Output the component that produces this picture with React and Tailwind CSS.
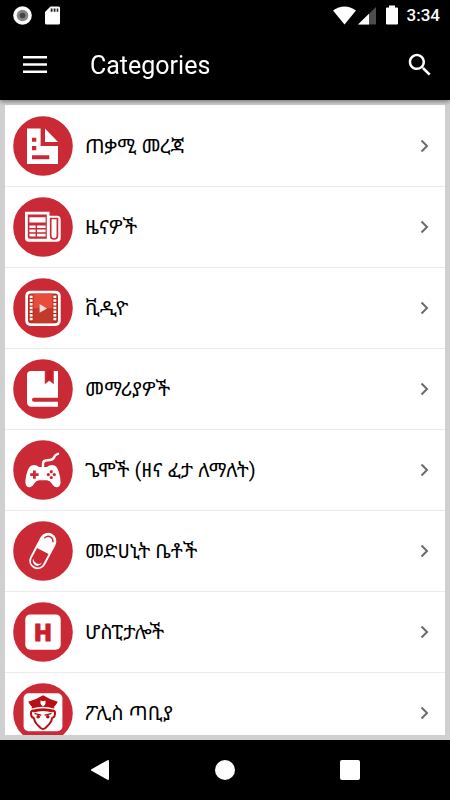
import React from "react";

const RED = "#c92a35";

function InfoIcon() {
  return (
    <>
      <path d="M14 12.6H27.6V30H45V48H14Z" fill="#fff" />
      <path d="M32 12.6L45 26H32Z" fill="#fff" />
      <path d="M19 21.7h4.3v4H19zM19 30h4.3v4.3H19zM19 39.3h17.3v4H19z" fill={RED} />
    </>
  );
}

function NewsIcon() {
  return (
    <>
      <path d="M12 14.7H36.5V18.7H44Q47.7 18.7 47.7 22.5V41Q47.7 44.8 44 44.8H16Q12 44.8 12 41Z" fill="#fff" />
      <path d="M14.8 17.4H33.8V41.8H17Q14.8 41.8 14.8 39.6Z" fill={RED} />
      <path d="M16.4 20.3H32.6V25.4H16.4zM16.4 28.5H22.6V31.1H16.4zM24 28.5H32.6V31.1H24zM16.4 32.6H22.6V35.2H16.4zM24 32.6H32.6V35.2H24zM16.4 36.7H22.6V39.6H18Q16.4 39.6 16.4 38zM24 36.7H32.6V39.6H24z" fill="#fff" />
      <path d="M37.7 21.5V38.5Q37.7 42 41 42Q44.4 42 44.4 38.5V21.5" fill="none" stroke={RED} strokeWidth="1.7" />
      <path d="M36.9 21.5H45.2" stroke={RED} strokeWidth="1.4" />
    </>
  );
}

function VideoIcon() {
  const holes = [17.6, 21.3, 25, 28.7, 32.4, 36.1, 39.8];
  return (
    <>
      <rect x="12.3" y="12.7" width="35.4" height="35.2" rx="5" fill="#fff" />
      <rect x="15" y="15.6" width="30" height="29.6" rx="3" fill="#b92b20" />
      <path d="M20.5 15.6H39.5V30.5H20.5Z" fill="#e84c3b" />
      <path d="M20.5 30.5H39.5V45.2H20.5Z" fill="#c33a2b" />
      {holes.map((y) => (
        <React.Fragment key={y}>
          <rect x="16.7" y={y} width="2.9" height="2.5" fill="#fff" />
          <rect x="40.4" y={y} width="2.9" height="2.5" fill="#fff" />
        </React.Fragment>
      ))}
      <path d="M26.6 26L34 30.4L26.6 34.7Z" fill="#ecdedb" />
    </>
  );
}

function BookIcon() {
  return (
    <>
      <path d="M18 12H45V47.7H18.5Q14 47.7 14 43V16Q14 12 18 12Z" fill="#fff" />
      <path d="M31.8 11.5H40.8V25.2L36.3 21.7L31.8 25.2Z" fill={RED} />
      <path d="M33.8 11.5H39V22L36.4 20L33.8 22Z" fill="#c21f2b" />
      <path d="M45.5 38.7H21a2 2 0 0 0 0 4H45.5Z" fill={RED} />
    </>
  );
}

function GameIcon() {
  return (
    <>
      <path d="M30 26V24Q30 20.5 34 20.3L37 20Q40.5 19.6 41.3 16.8Q42 14.6 45 13.8" fill="none" stroke="#fff" strokeWidth="2.4" strokeLinecap="round" />
      <path d="M20.5 25Q24 25 26 27H34Q36 25 39.5 25Q43.5 25 45.5 31Q47.8 38 47.6 42.5Q47.2 47 43.8 47.3Q41 47.3 38.8 43.5Q37 40.5 34 40.3H26Q23 40.5 21.2 43.5Q19 47.3 16.2 47.3Q12.8 47 12.4 42.5Q12.2 38 14.5 31Q16.5 25 20.5 25Z" fill="#fff" />
      <path d="M20 30.5h2.8V33.2h2.8V36h-2.8V38.7H20V36h-2.8V33.2H20Z" fill={RED} />
      <circle cx="38.3" cy="31.7" r="1.6" fill={RED} />
      <circle cx="38.3" cy="37.5" r="1.6" fill={RED} />
      <circle cx="35.3" cy="34.6" r="1.6" fill={RED} />
      <circle cx="41.3" cy="34.6" r="1.6" fill={RED} />
    </>
  );
}

function PillIcon() {
  return (
    <g transform="rotate(28 29.8 30)">
      <rect x="21.4" y="10.6" width="16.8" height="38.8" rx="8.4" fill="#fff" />
      <path d="M23.3 30H36.3V41Q36.3 47.5 29.8 47.5Q23.3 47.5 23.3 41Z" fill={RED} />
      <path d="M34.6 40.5Q34.5 45.5 29.8 46Q25.6 45.6 24.9 41.5Q26.8 43.9 29.8 43.9Q33.2 43.9 34.6 40.5Z" fill="#fff" />
      <path d="M25.3 17.4Q26.6 14 30 14Q33 14.1 34.4 17" fill="none" stroke={RED} strokeWidth="1.4" strokeLinecap="round" />
    </g>
  );
}

function HospitalIcon() {
  return (
    <>
      <rect x="12.3" y="12.4" width="35.4" height="35.4" rx="5" fill="#fff" />
      <text x="30" y="39" textAnchor="middle" fill="#c9202c" stroke="#c9202c" className="font-['Roboto',sans-serif] text-[24px] font-black">H</text>
    </>
  );
}

function PoliceIcon() {
  const c = "#b80f16";
  return (
    <>
      <rect x="10.6" y="10.2" width="38.8" height="38" rx="5" fill="#fff" />
      <path d="M15.2 18.8Q23 16.6 30 12.2Q37 16.6 44.8 18.8Q42.8 22.6 41.2 23.6V25.6Q30 21.8 18.8 25.6V23.6Q17.2 22.6 15.2 18.8Z" fill={c} />
      <path d="M27.5 17.5L30 18.2L32.5 17.5V20.5Q32.3 22 30 23.2Q27.7 22 27.5 20.5Z" fill="#fff" />
      <path d="M20 27.5Q17.6 28 18 31Q18.4 34.6 20.8 35Q21.6 39 24 41.4L27.6 45Q30 46.8 32.4 45L36 41.4Q38.4 39 39.2 35Q41.6 34.6 42 31Q42.4 28 40 27.5" fill="none" stroke={c} strokeWidth="2" strokeLinejoin="round" />
      <path d="M19.4 26.8Q30 23.8 40.6 26.8L39.5 29.5Q30 26.5 20.5 29.5Z" fill={c} />
      <path d="M22 30.6L28 32.2M38 30.6L32 32.2" stroke={c} strokeWidth="1.3" strokeLinecap="round" />
      <circle cx="25.2" cy="33.8" r="1.8" fill={c} />
      <circle cx="34.8" cy="33.8" r="1.8" fill={c} />
    </>
  );
}

const categories = [
  { label: "ጠቃሚ መረጃ", Icon: InfoIcon },
  { label: "ዜናዎች", Icon: NewsIcon },
  { label: "ቪዲዮ", Icon: VideoIcon },
  { label: "መማሪያዎች", Icon: BookIcon },
  { label: "ጌሞች (ዘና ፈታ ለማለት)", Icon: GameIcon },
  { label: "መድሀኒት ቤቶች", Icon: PillIcon },
  { label: "ሆስፒታሎች", Icon: HospitalIcon },
  { label: "ፖሊስ ጣቢያ", Icon: PoliceIcon },
];

function StatusBar() {
  return (
    <div className="flex h-[30px] shrink-0 items-center justify-between pl-[13px] pr-[10px]">
      <div className="flex items-center gap-[13px]">
        <svg width="19" height="19" viewBox="0 0 19 19" aria-hidden="true">
          <circle cx="9.5" cy="9.5" r="9.3" fill="#fff" />
          <circle cx="9.5" cy="9.5" r="5.8" fill="#858585" />
          <circle cx="9.5" cy="9.5" r="2.8" fill="#444" />
        </svg>
        <svg width="15" height="19" viewBox="0 0 15 19" aria-hidden="true">
          <path d="M5.5 .5H13.5Q15 .5 15 2V17Q15 18.5 13.5 18.5H1.5Q0 18.5 0 17V6Z" fill="#fff" />
          <path d="M5.7 2.5h1.8v3.2H5.7zM8.7 2.5h1.8v3.2H8.7zM11.7 2.5h1.6v3.2h-1.6z" fill="#222" />
        </svg>
      </div>
      <div className="flex items-center">
        <svg width="23" height="19" viewBox="0 0 23 19" aria-hidden="true">
          <path d="M0 4.5Q11.5-3.6 23 4.5L11.5 18.5Z" fill="#fff" />
        </svg>
        <svg width="18" height="19" viewBox="0 0 18 19" className="ml-[2px]" aria-hidden="true">
          <path d="M18 1V18.5H0Z" fill="#4d4d4d" />
          <path d="M11 7.8V18.5H0Z" fill="#fff" />
        </svg>
        <svg width="12" height="20" viewBox="0 0 12 20" className="ml-[10px]" aria-hidden="true">
          <path d="M3 .5H9V2.5H11Q12 2.5 12 3.5V18.5Q12 19.5 11 19.5H1Q0 19.5 0 18.5V3.5Q0 2.5 1 2.5H3Z" fill="#fff" />
        </svg>
        <span className="ml-[9px] text-[17px] font-medium leading-[30px]">3:34</span>
      </div>
    </div>
  );
}

function AppBar() {
  return (
    <header className="z-10 flex h-[70px] shrink-0 items-center bg-black px-[17px] shadow-[0_1px_5px_rgba(0,0,0,0.5)]">
      <button type="button" aria-label="Open menu" className="flex size-9 items-center justify-center">
        <svg width="24" height="18" viewBox="0 0 24 18" fill="#fff" aria-hidden="true">
          <path d="M0 0h24v2.6H0zM0 7.2h24v2.6H0zM0 14.4h24V17H0z" />
        </svg>
      </button>
      <h1 className="ml-[37px] flex-1 pt-[2px] text-[25px] leading-8">Categories</h1>
      <button type="button" aria-label="Search" className="-mr-[5px] flex size-9 items-center justify-center">
        <svg width="30" height="30" viewBox="0 0 24 24" fill="#fff" aria-hidden="true">
          <path d="M15.5 14h-.79l-.28-.27C15.41 12.59 16 11.11 16 9.5 16 5.91 13.09 3 9.5 3S3 5.91 3 9.5 5.91 16 9.5 16c1.61 0 3.09-.59 4.23-1.57l.27.28v.79l5 4.99L20.49 19l-4.99-5zm-6 0C7.01 14 5 11.99 5 9.5S7.01 5 9.5 5 14 7.01 14 9.5 11.99 14 9.5 14z" />
        </svg>
      </button>
    </header>
  );
}

function CategoryRow({ label, Icon }) {
  return (
    <li className="border-b border-[#ebebeb]">
      <a href="#" className="flex h-20 items-center pl-2 pr-[14px]">
        <svg width="60" height="60" viewBox="0 0 60 60" className="shrink-0" aria-hidden="true">
          <circle cx="30" cy="30" r="29.8" fill={RED} />
          <Icon />
        </svg>
        <span className="ml-3 flex-1 text-[20px] leading-7 text-black">{label}</span>
        <svg width="13" height="14" viewBox="0 0 13 14" fill="none" stroke="#6b6b6b" strokeWidth="2" aria-hidden="true">
          <path d="M3.5 1.5L9 7L3.5 12.5" />
        </svg>
      </a>
    </li>
  );
}

function NavBar() {
  return (
    <nav className="grid h-[60px] shrink-0 grid-cols-[1fr_125px_125px_125px_1fr] items-center justify-items-center">
      <span />
      <button type="button" aria-label="Back">
        <svg width="20" height="20" viewBox="0 0 20 20" aria-hidden="true">
          <path d="M18 1V19L2 10Z" fill="#fff" stroke="#fff" strokeWidth="2" strokeLinejoin="round" />
        </svg>
      </button>
      <button type="button" aria-label="Home" className="size-5 rounded-full bg-white" />
      <button type="button" aria-label="Recent apps" className="size-5 rounded-xs bg-white" />
      <span />
    </nav>
  );
}

export default function App() {
  return (
    <div className="flex h-screen flex-col bg-black font-['Roboto','Noto_Sans_Ethiopic','Noto_Sans',sans-serif] text-white">
      <StatusBar />
      <AppBar />
      <main className="flex min-h-0 flex-1 flex-col bg-[#d0d0d0] p-[5px]">
        <ul className="min-h-0 flex-1 overflow-y-auto bg-white pt-px [scrollbar-width:none]">
          {categories.map((c) => (
            <CategoryRow key={c.label} {...c} />
          ))}
        </ul>
      </main>
      <NavBar />
    </div>
  );
}
